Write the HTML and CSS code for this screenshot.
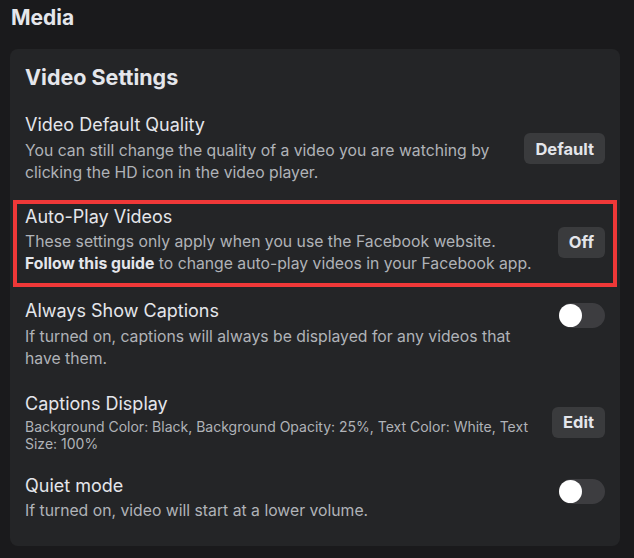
FILE: index.html
```html
<!DOCTYPE html>
<html lang="en">
<head>
<meta charset="utf-8">
<title>Media</title>
<link rel="stylesheet" href="styles.css">
</head>
<body>
<h1 class="page-title">Media</h1>
<section class="card">
  <h2 class="card-title">Video Settings</h2>

  <div class="row row-first">
    <div class="text">
      <div class="label">Video Default Quality</div>
      <div class="desc">You can still change the quality of a video you are watching by clicking the HD icon in the video player.</div>
    </div>
    <button class="btn">Default</button>
  </div>

  <div class="highlight">
    <div class="row row-hl">
      <div class="text">
        <div class="label">Auto-Play Videos</div>
        <div class="desc">These settings only apply when you use the Facebook website.<br><b class="strong">Follow this guide</b> to change auto-play videos in your Facebook app.</div>
      </div>
      <button class="btn btn-off">Off</button>
    </div>
  </div>

  <div class="row row-top row-captions">
    <div class="text">
      <div class="label">Always Show Captions</div>
      <div class="desc">If turned on, captions will always be displayed for any videos that have them.</div>
    </div>
    <span class="toggle"><span class="knob"></span></span>
  </div>

  <div class="row row-display">
    <div class="text">
      <div class="label">Captions Display</div>
      <div class="desc small">Background Color: Black, Background Opacity: 25%, Text Color: White, Text Size: 100%</div>
    </div>
    <button class="btn">Edit</button>
  </div>

  <div class="row row-top row-quiet">
    <div class="text">
      <div class="label">Quiet mode</div>
      <div class="desc">If turned on, video will start at a lower volume.</div>
    </div>
    <span class="toggle"><span class="knob"></span></span>
  </div>
</section>
</body>
</html>
```
FILE: styles.css
```css
* { box-sizing: border-box; }
html, body { margin: 0; padding: 0; }
body {
  background: #1a1a1c;
  font-family: Inter, "Noto Sans", "Liberation Sans", sans-serif;
  color: #e4e6eb;
  width: 634px;
  height: 558px;
  overflow: hidden;
}
.page-title {
  margin: 0;
  padding: 5px 0 0 11px;
  font-size: 21px;
  line-height: 26px;
  font-weight: 700;
  color: #e4e6eb;
}
.card {
  margin: 18px 14px 0 10px;
  background: #242527;
  border-radius: 8px;
  padding: 16px 15px 24px 15px;
  height: 497px;
}
.card-title {
  margin: 0;
  font-size: 21.5px;
  line-height: 24px;
  font-weight: 700;
}
.row {
  display: flex;
  align-items: center;
  gap: 16px;
}
.row-top { align-items: flex-start; }
.text { flex: 1; min-width: 0; }
.label {
  font-size: 18px;
  line-height: 24px;
  font-weight: 400;
  color: #e4e6eb;
}
.desc {
  margin-top: 3px;
  font-size: 15.75px;
  line-height: 22px;
  color: #b0b3b8;
}
.desc.small {
  margin-top: 2px;
  font-size: 14px;
  line-height: 17px;
}
.strong { color: #e4e6eb; font-weight: 700; }
.row-first { margin-top: 24px; }
.highlight {
  margin: 16px -12px 0 -12px;
  border: 4px solid #ef3838;
  padding: 1px 8px 8px 8px;
}
.row-hl .desc { margin-top: 2px; }
.btn-off { margin-top: 4px; }
.row-captions { margin-top: 12px; }
.row-captions .toggle { margin-top: 4px; }
.row-display { margin-top: 22px; }
.row-quiet { margin-top: 22px; }
.row-quiet .desc { margin-top: 2px; }
.row-quiet .toggle { margin-top: 5px; }
.btn {
  font-family: inherit;
  font-size: 16.5px;
  font-weight: 700;
  color: #e4e6eb;
  background: #3a3b3d;
  border: none;
  border-radius: 6px;
  height: 31px;
  padding: 0 11px;
  flex: none;
}
.toggle {
  flex: none;
  width: 46px;
  height: 25px;
  border-radius: 13px;
  background: #3d3d40;
  display: flex;
  align-items: center;
}
.knob {
  width: 23px;
  height: 23px;
  border-radius: 50%;
  background: #ffffff;
}
```
